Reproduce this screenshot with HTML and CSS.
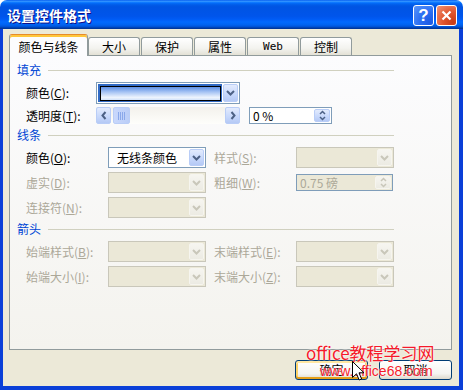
FILE: index.html
```html
<!DOCTYPE html>
<html lang="zh-CN">
<head>
    <meta charset="UTF-8">
    <title>设置控件格式</title>
    <link rel="stylesheet" href="styles.css">
</head>
<body>
<div class="window">
    <div class="titlebar">
        <span class="title">设置控件格式</span>
        <div class="title-buttons">
            <span class="tb-btn help">?</span>
            <span class="tb-btn close">
                <svg width="11" height="11" viewBox="0 0 11 11"><path d="M1.5 1.5 L9.5 9.5 M9.5 1.5 L1.5 9.5" stroke="#fff" stroke-width="2.2" fill="none"/></svg>
            </span>
        </div>
    </div>

    <div class="client">
        <div class="tabs">
            <div class="tab active">颜色与线条</div>
            <div class="tab">大小</div>
            <div class="tab">保护</div>
            <div class="tab">属性</div>
            <div class="tab web">Web</div>
            <div class="tab">控制</div>
        </div>

        <div class="panel">
            <!-- 填充 -->
            <div class="group-title">填充</div>
            <div class="row">
                <span class="lbl">颜色(<u>C</u>):</span>
                <div class="combo color-combo">
                    <span class="color-sel"><span class="swatch"></span></span>
                    <span class="drop"><svg width="9" height="6" viewBox="0 0 9 6"><polyline points="1,1 4.5,4.5 8,1" /></svg></span>
                </div>
            </div>
            <div class="row short">
                <span class="lbl">透明度(<u>T</u>):</span>
                <div class="hscroll">
                    <span class="sb-btn"><svg width="6" height="9" viewBox="0 0 6 9"><polyline points="4.5,1 1.5,4.5 4.5,8" /></svg></span>
                    <span class="sb-track">
                        <span class="sb-thumb"><svg width="7" height="8" viewBox="0 0 7 8"><path d="M0.5 0v8M2.5 0v8M4.5 0v8M6.5 0v8" /></svg></span>
                    </span>
                    <span class="sb-btn"><svg width="6" height="9" viewBox="0 0 6 9"><polyline points="1.5,1 4.5,4.5 1.5,8" /></svg></span>
                </div>
                <div class="spin-box">
                    <span class="spin-value">0 %</span>
                    <span class="spin-btn"><svg width="7" height="11" viewBox="0 0 7 11"><polyline points="1,4 3.5,1.5 6,4" /><polyline points="1,7 3.5,9.5 6,7" /></svg></span>
                </div>
            </div>

            <!-- 线条 -->
            <div class="group-title">线条</div>
            <div class="row">
                <span class="lbl wide">颜色(<u>O</u>):</span>
                <div class="combo narrow">
                    <span class="combo-value">无线条颜色</span>
                    <span class="drop"><svg width="9" height="6" viewBox="0 0 9 6"><polyline points="1,1 4.5,4.5 8,1" /></svg></span>
                </div>
                <span class="lbl wide second disabled">样式(<u>S</u>):</span>
                <div class="combo narrow off">
                    <span class="combo-value"></span>
                    <span class="drop"><svg width="9" height="6" viewBox="0 0 9 6"><polyline points="1,1 4.5,4.5 8,1" /></svg></span>
                </div>
            </div>
            <div class="row">
                <span class="lbl wide disabled">虚实(<u>D</u>):</span>
                <div class="combo narrow off">
                    <span class="combo-value"></span>
                    <span class="drop"><svg width="9" height="6" viewBox="0 0 9 6"><polyline points="1,1 4.5,4.5 8,1" /></svg></span>
                </div>
                <span class="lbl wide second disabled">粗细(<u>W</u>):</span>
                <div class="spin-box weight off">
                    <span class="spin-value">0.75 磅</span>
                    <span class="spin-btn"><svg width="7" height="11" viewBox="0 0 7 11"><polyline points="1,4 3.5,1.5 6,4" /><polyline points="1,7 3.5,9.5 6,7" /></svg></span>
                </div>
            </div>
            <div class="row">
                <span class="lbl wide disabled">连接符(<u>N</u>):</span>
                <div class="combo narrow off">
                    <span class="combo-value"></span>
                    <span class="drop"><svg width="9" height="6" viewBox="0 0 9 6"><polyline points="1,1 4.5,4.5 8,1" /></svg></span>
                </div>
            </div>

            <!-- 箭头 -->
            <div class="group-title">箭头</div>
            <div class="row">
                <span class="lbl wide disabled">始端样式(<u>B</u>):</span>
                <div class="combo narrow off">
                    <span class="combo-value"></span>
                    <span class="drop"><svg width="9" height="6" viewBox="0 0 9 6"><polyline points="1,1 4.5,4.5 8,1" /></svg></span>
                </div>
                <span class="lbl wide second disabled">末端样式(<u>E</u>):</span>
                <div class="combo narrow off">
                    <span class="combo-value"></span>
                    <span class="drop"><svg width="9" height="6" viewBox="0 0 9 6"><polyline points="1,1 4.5,4.5 8,1" /></svg></span>
                </div>
            </div>
            <div class="row">
                <span class="lbl wide disabled">始端大小(<u>I</u>):</span>
                <div class="combo narrow off">
                    <span class="combo-value"></span>
                    <span class="drop"><svg width="9" height="6" viewBox="0 0 9 6"><polyline points="1,1 4.5,4.5 8,1" /></svg></span>
                </div>
                <span class="lbl wide second disabled">末端大小(<u>Z</u>):</span>
                <div class="combo narrow off">
                    <span class="combo-value"></span>
                    <span class="drop"><svg width="9" height="6" viewBox="0 0 9 6"><polyline points="1,1 4.5,4.5 8,1" /></svg></span>
                </div>
            </div>
        </div>

        <div class="actions">
            <button class="btn hot">确定</button>
            <button class="btn">取消</button>
        </div>
    </div>

    <div class="watermark">
        <div class="wm-name">office教程学习网</div>
        <div class="wm-url">www.office68.com</div>
    </div>

    <svg class="cursor" width="13" height="21" viewBox="0 0 13 21">
        <path d="M0.5 0.5 L0.5 16.5 L4.5 12.8 L7.2 19 L9.6 18 L7 11.8 L12 11.8 Z" fill="#fff" stroke="#000" stroke-width="1"/>
    </svg>
</div>
</body>
</html>
```

FILE: styles.css
```css
body {
    margin: 0;
    background: #fff;
    font-family: "Noto Sans CJK SC", "Liberation Sans", sans-serif;
    font-size: 12px;
    color: #000;
}

.window {
    position: relative;
    width: 463px;
    height: 390px;
    display: flex;
    flex-direction: column;
    border-radius: 7px 7px 0 0;
    overflow: hidden;
}

/* title bar */
.titlebar {
    flex: none;
    height: 29px;
    box-sizing: border-box;
    display: flex;
    align-items: center;
    justify-content: space-between;
    padding: 1px 6px 0 7px;
    color: #fff;
    background: linear-gradient(#0058ee 0%, #3593ff 4%, #288eff 6%, #127dff 8%, #036ffc 10%, #0262ee 14%, #0057e5 20%, #0054e3 24%, #0055eb 56%, #005bf5 66%, #026afe 76%, #0062ef 86%, #0052d6 92%, #0040ab 96%, #003092 100%);
}
.title {
    font-size: 14px;
    font-weight: bold;
    line-height: 16px;
    text-shadow: 1px 1px #0f1089;
}
.title-buttons {
    display: flex;
    gap: 2px;
}
.tb-btn {
    width: 21px;
    height: 21px;
    box-sizing: border-box;
    border: 1px solid #fff;
    border-radius: 3px;
    display: flex;
    align-items: center;
    justify-content: center;
}
.tb-btn.help {
    background: radial-gradient(circle at 85% 85%, #1c5ae4 0%, #2a6ef2 45%, #5a96fa 100%);
    font-family: "Liberation Sans", sans-serif;
    font-size: 17px;
    font-weight: bold;
    line-height: 1;
}
.tb-btn.close {
    background: radial-gradient(circle at 85% 85%, #c83b16 0%, #e0562f 45%, #f29577 100%);
}

/* dialog client area */
.client {
    flex: 1;
    display: flex;
    flex-direction: column;
    background: #ece9d8;
    border: solid #0a3fd8;
    border-width: 0 4px 4px 3px;
    padding: 5px 7px 0 6px;
}

/* tabs */
.tabs {
    position: relative;
    z-index: 1;
    display: flex;
    align-items: flex-end;
    height: 22px;
    margin-bottom: -1px;
}
.tab {
    width: 52px;
    height: 18px;
    margin: 0 1px 1px 0;
    box-sizing: border-box;
    border: 1px solid #919b9c;
    border-bottom: none;
    border-radius: 3px 3px 0 0;
    background: linear-gradient(#ffffff, #f3f3ef 60%, #e3e1d6);
    display: flex;
    align-items: center;
    justify-content: center;
    line-height: 14px;
    padding-top: 1px;
}
.tab.active {
    width: 79px;
    height: 22px;
    margin: 0;
    border-top: 1px solid #e68b2c;
    box-shadow: inset 0 2px #ffc73c;
    background: #fcfcfe;
    padding-top: 3px;
}
.tab.web {
    font-family: "DejaVu Sans Mono", monospace;
    font-size: 11px;
}

/* tab panel */
.panel {
    height: 295px;
    box-sizing: border-box;
    border: 1px solid #919b9c;
    background: linear-gradient(#fcfcfe, #f4f3ee);
    padding: 3px 0 0 7px;
}
.group-title {
    display: flex;
    align-items: center;
    width: 377px;
    height: 14px;
    margin: 4px 0 5px 0;
    color: #0046d5;
    line-height: 14px;
}
.group-title::after {
    content: "";
    flex: 1;
    margin-left: 7px;
    border-top: 1px solid #d0d0bf;
}

.row {
    display: flex;
    align-items: center;
    height: 21px;
    margin: 0 0 4px 9px;
}
.row.short {
    height: 17px;
}
.lbl {
    width: 70px;
    flex: none;
    line-height: 14px;
    white-space: nowrap;
}
.lbl.wide {
    width: 82px;
}
.lbl.second {
    margin-left: 8px;
}
.disabled {
    color: #aca899;
}

/* combo boxes */
.combo {
    flex: none;
    height: 21px;
    box-sizing: border-box;
    border: 1px solid #7f9db9;
    background: #fff;
    display: flex;
    padding: 1px;
}
.combo.narrow {
    width: 98px;
}
.combo.off {
    border-color: #c9c7ba;
    background: #ebe8d7;
}
.combo-value {
    flex: 1;
    padding-left: 7px;
    line-height: 17px;
}
.color-combo {
    width: 144px;
    height: 22px;
}
.color-sel {
    flex: 1;
    background: #316ac5;
    padding: 2px 1px 1px 2px;
    margin-right: 1px;
}
.swatch {
    display: block;
    height: 100%;
    box-sizing: border-box;
    border: 1px solid #000;
    background: linear-gradient(#5d8fe4, #a9c5f4 40%, #eef4fd 80%, #d3e2fa);
}
.drop {
    width: 15px;
    box-sizing: border-box;
    border: 1px solid #b9cdf7;
    border-radius: 2px;
    background: linear-gradient(#e3ebfd, #c6d7fb 60%, #b5c9f5);
    display: flex;
    align-items: center;
    justify-content: center;
    color: #4d6185;
}
.drop svg polyline,
.sb-btn svg polyline,
.spin-btn svg polyline {
    fill: none;
    stroke: currentColor;
    stroke-width: 2;
}
.combo.off .drop {
    border-color: #f6f5ef;
    background: linear-gradient(#f6f5f0, #ecebe3);
    color: #c9c7ba;
}

/* scroll bar */
.hscroll {
    width: 144px;
    height: 17px;
    display: flex;
    background: linear-gradient(#f3f1ec, #fefefb);
}
.sb-btn {
    width: 15px;
    box-sizing: border-box;
    border: 1px solid #b9cdf7;
    border-radius: 2px;
    background: linear-gradient(#e3ebfd, #c6d7fb 60%, #b5c9f5);
    display: flex;
    align-items: center;
    justify-content: center;
    color: #4d6185;
}
.sb-track {
    flex: 1;
    padding-left: 2px;
    display: flex;
}
.sb-thumb {
    width: 17px;
    box-sizing: border-box;
    border: 1px solid #b9cdf7;
    border-radius: 2px;
    background: linear-gradient(90deg, #c9d8fc, #bacdf7);
    display: flex;
    align-items: center;
    justify-content: center;
}
.sb-thumb path {
    stroke: #8aa8ea;
    stroke-width: 1;
}

/* spin text boxes */
.spin-box {
    width: 83px;
    height: 17px;
    margin-left: 9px;
    box-sizing: border-box;
    border: 1px solid #7f9db9;
    background: #fff;
    display: flex;
    padding: 1px;
}
.spin-box.weight {
    width: 97px;
    margin-left: 0;
}
.spin-box.off {
    background: #ebe8d7;
    color: #aca899;
}
.spin-value {
    flex: 1;
    padding-left: 2px;
    line-height: 13px;
}
.spin-btn {
    width: 16px;
    box-sizing: border-box;
    border: 1px solid #b9cdf7;
    border-radius: 2px;
    background: linear-gradient(#e3ebfd, #c6d7fb 60%, #b5c9f5);
    display: flex;
    align-items: center;
    justify-content: center;
    color: #4d6185;
}
.spin-btn svg polyline {
    stroke-width: 1.5;
}
.spin-box.off .spin-btn {
    border-color: #f6f5ef;
    background: linear-gradient(#f6f5f0, #ecebe3);
    color: #c9c7ba;
}

/* OK / Cancel */
.actions {
    display: flex;
    justify-content: flex-end;
    gap: 11px;
    margin-top: 10px;
}
.btn {
    width: 73px;
    height: 20px;
    padding: 0;
    border: 1px solid #003c74;
    border-radius: 3px;
    background: linear-gradient(#ffffff, #f4f4f0 70%, #dcd8cc);
    font: inherit;
    color: #000;
    line-height: 16px;
}
.btn.hot {
    box-shadow: inset 0 2px #ffe7a2, inset 0 -2px #e5a01a, inset 2px 0 #fbd26a, inset -2px 0 #fbd26a;
}

/* watermark over the picture */
.watermark {
    position: absolute;
    left: 306px;
    top: 343px;
    color: #f51a2a;
    text-shadow: 0 0 2px #fff, 0 0 1px #fff;
}
.wm-name {
    font-size: 17px;
    line-height: 20px;
}
.wm-url {
    margin-left: 14px;
    font-family: "Liberation Sans", sans-serif;
    font-size: 14px;
    line-height: 16px;
}
.cursor {
    position: absolute;
    left: 352px;
    top: 361px;
}
```
